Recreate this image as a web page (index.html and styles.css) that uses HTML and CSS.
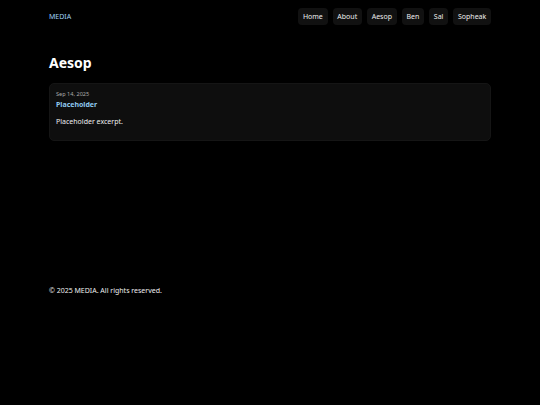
FILE: index.html
```html
<!DOCTYPE html>
<html lang="en">
<head>
<meta charset="utf-8">
<title>Aesop</title>
<link rel="stylesheet" href="styles.css">
</head>
<body>
<div class="wrap">
  <header class="site-header">
    <a class="brand" href="#">MEDIA</a>
    <nav class="nav">
      <a href="#">Home</a>
      <a href="#">About</a>
      <a href="#">Aesop</a>
      <a href="#">Ben</a>
      <a href="#">Sal</a>
      <a href="#">Sopheak</a>
    </nav>
  </header>
  <main class="main">
    <h1 class="title">Aesop</h1>
    <article class="card">
      <div class="date">Sep 14, 2025</div>
      <a class="post-title" href="#">Placeholder</a>
      <p class="excerpt">Placeholder excerpt.</p>
    </article>
  </main>
  <footer class="footer">© 2025 MEDIA. All rights reserved.</footer>
</div>
</body>
</html>
```
FILE: styles.css
```css
html, body {
  margin: 0;
  padding: 0;
  background: #000;
  color: #eee;
  font-family: "Noto Sans", "Open Sans", sans-serif;
}
a { text-decoration: none; }
.wrap {
  width: 442px;
  margin: 0 auto;
}
.site-header {
  display: flex;
  justify-content: space-between;
  align-items: center;
  padding-top: 8px;
  height: 17px;
}
.brand {
  color: #9fd0f5;
  font-size: 7px;
}
.nav {
  display: flex;
  gap: 5px;
}
.nav a {
  background: #111;
  color: #eee;
  font-size: 7px;
  line-height: 17px;
  padding: 0 4.75px;
  border-radius: 4px;
}
.main {
  padding-top: 26px;
  min-height: 240px;
}
.title {
  margin: 0 0 10px;
  font-size: 14px;
  font-weight: 700;
  color: #fff;
  line-height: 22px;
  position: relative;
  top: 1px;
}
.card {
  background: #0e0e0e;
  border: 1px solid #151515;
  border-radius: 5px;
  padding: 5px 6px 13px;
}
.date {
  font-size: 5.6px;
  color: #aaa;
  line-height: 10px;
}
.post-title {
  display: block;
  color: #8ec9f0;
  font-size: 7px;
  font-weight: 700;
  line-height: 11px;
}
.excerpt {
  margin: 6px 0 0;
  font-size: 7px;
  line-height: 11px;
  color: #eee;
}
.footer {
  font-size: 7px;
  color: #eee;
  line-height: 11px;
  margin-top: -6px;
}
```
